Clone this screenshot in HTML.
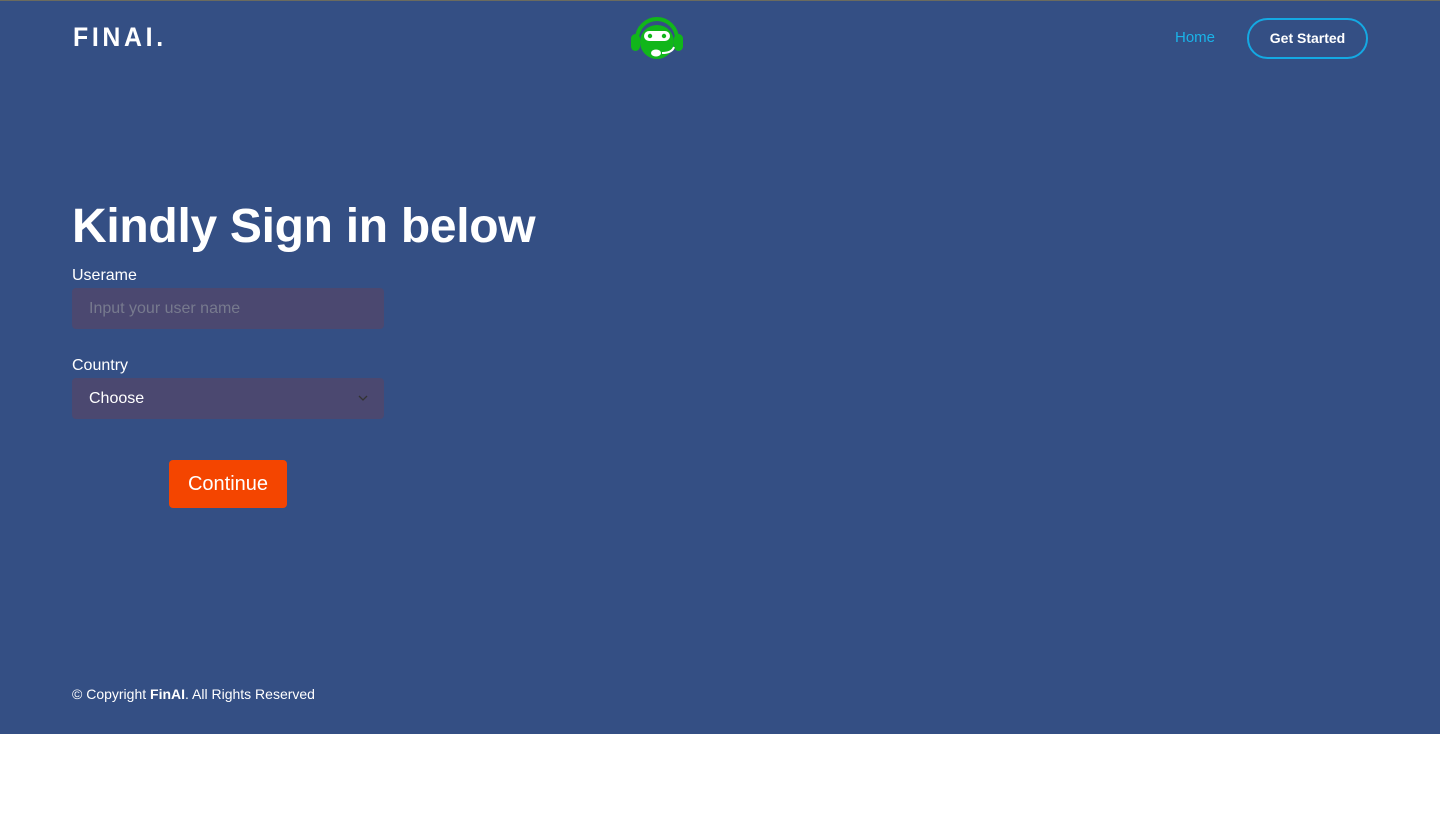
<!DOCTYPE html>
<html><head><meta charset="utf-8"><style>
*{margin:0;padding:0;box-sizing:border-box}
body{width:1440px;height:816px;background:#fff;font-family:"Liberation Sans",sans-serif;overflow:hidden}
.main{position:absolute;left:0;top:0;width:1440px;height:734px;background:#344f84;border-top:1px solid #6b6b5e}
.logo{position:absolute;left:73px;top:21px;color:#fff;font-size:27px;letter-spacing:4px;font-weight:bold;transform:scaleX(0.92);transform-origin:left}
.robot{position:absolute;left:630px;top:16px}
.home{position:absolute;left:1175px;top:28px;color:#1ab3e8;font-size:15px}
.gs{position:absolute;left:1247px;top:17px;width:121px;height:41px;border:2px solid #14a9e3;border-radius:21px;color:#fff;font-weight:bold;font-size:14px;text-align:center;line-height:36px}
h1{position:absolute;left:72px;top:198px;color:#fff;font-size:48px;font-weight:bold;letter-spacing:-0.3px}
.lab{position:absolute;left:72px;color:#fff;font-size:16px}
.field{position:absolute;left:72px;width:312px;height:41px;background:#4b4870;border-radius:4px;font-size:16px;padding-left:17px;line-height:41px}
.btn{position:absolute;left:169px;top:459px;width:118px;height:48px;background:#f44500;border-radius:4px;color:#fff;font-size:20px;text-align:center;line-height:48px}
.foot{position:absolute;left:72px;top:685px;color:#fff;font-size:14px}
</style></head><body>
<div class="main">
<div class="logo">FINAI.</div>
<svg class="robot" width="54" height="44" viewBox="0 0 54 44">
<path d="M7 22 A20 20 0 0 1 47 22" fill="none" stroke="#11b61a" stroke-width="4"/>
<rect x="1" y="17" width="9" height="17" rx="4.5" fill="#11b61a"/>
<rect x="44" y="17" width="9" height="17" rx="4.5" fill="#11b61a"/>
<ellipse cx="27" cy="25" rx="17" ry="17" fill="#11b61a"/>
<rect x="14" y="14" width="26" height="10" rx="5" fill="#fff"/>
<circle cx="20" cy="19" r="2.2" fill="#11b61a"/>
<circle cx="34" cy="19" r="2.2" fill="#11b61a"/>
<path d="M44 30 Q42 36 32 36" fill="none" stroke="#fff" stroke-width="2"/>
<ellipse cx="26" cy="36" rx="5" ry="3.5" fill="#fff"/>
</svg>
<div class="home">Home</div>
<div class="gs">Get Started</div>
<h1>Kindly Sign in below</h1>
<div class="lab" style="top:266px">Userame</div>
<div class="field" style="top:287px;color:#777a8e">Input your user name</div>
<div class="lab" style="top:356px">Country</div>
<div class="field" style="top:377px;color:#fff">Choose
<svg style="position:absolute;right:16px;top:17px" width="10" height="7" viewBox="0 0 10 7"><path d="M1 1 L5 5 L9 1" fill="none" stroke="#333" stroke-width="1.3"/></svg></div>
<div class="btn">Continue</div>
<div class="foot">© Copyright <b>FinAI</b>. All Rights Reserved</div>
</div>
</body></html>
